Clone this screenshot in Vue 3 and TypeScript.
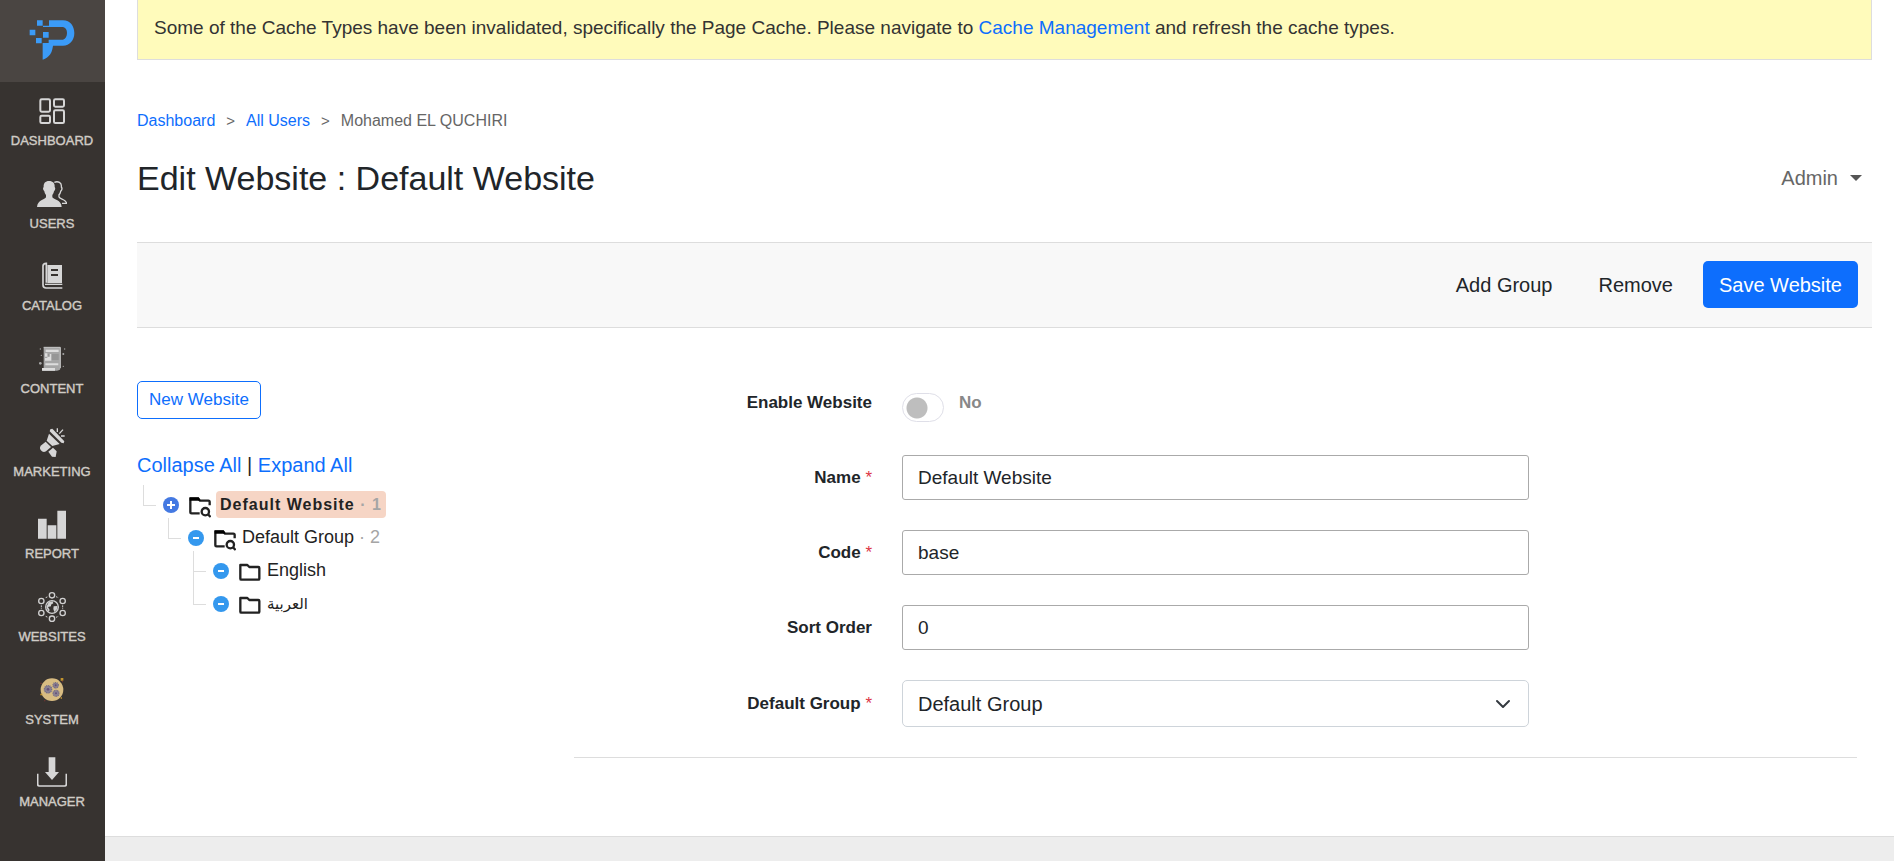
<script setup lang="ts">
import { ref } from 'vue'

const navItems: { id: string; label: string }[] = [
  { id: 'dashboard', label: 'DASHBOARD' },
  { id: 'users', label: 'USERS' },
  { id: 'catalog', label: 'CATALOG' },
  { id: 'content', label: 'CONTENT' },
  { id: 'marketing', label: 'MARKETING' },
  { id: 'report', label: 'REPORT' },
  { id: 'websites', label: 'WEBSITES' },
  { id: 'system', label: 'SYSTEM' },
  { id: 'manager', label: 'MANAGER' },
]

interface TreeRow {
  label: string
  depth: number
  lang?: string
  count?: number
  open?: boolean
  selected?: boolean
  sibling?: boolean
}

const tree: TreeRow[] = [
  { label: 'Default Website', depth: 0, count: 1, selected: true },
  { label: 'Default Group', depth: 1, count: 2, open: true },
  { label: 'English', depth: 2, open: true },
  { label: 'العربية', depth: 2, open: true, sibling: true, lang: 'ar' },
]

const enabled = ref(false)
const name = ref('Default Website')
const code = ref('base')
const sortOrder = ref('0')
const group = ref('Default Group')
</script>

<template>
  <div class="page">
    <aside class="sidebar">
      <a class="logo" href="#" aria-label="Home">
        <svg width="46" height="42" viewBox="88 58 138 126" fill="#3b9bf8">
          <path d="M148 62H190C212 62 224 80 224 100C224 122 210 138 190 138H160C157 160 150 172 129 180V130H147V120H190C198 118 202 110 202 100C202 90 198 84 190 82H130V78H148Z" />
          <path d="M112 62h17v16h-17zM90 90h17v17h-17zM109 115h17v16h-17zM130 97h17v17h-17z" />
        </svg>
      </a>
      <nav class="nav" aria-label="Main">
        <a v-for="item in navItems" :key="item.id" class="nav-item" href="#">
          <svg class="nav-icon" width="30" height="30" viewBox="0 0 90 90" fill="#d6d6d6" aria-hidden="true">
            <g v-if="item.id === 'dashboard'" fill="none" stroke="#d6d6d6" stroke-width="6">
              <rect x="10" y="10" width="29" height="37" rx="4" />
              <rect x="51" y="10" width="30" height="22" rx="4" />
              <rect x="10" y="59" width="29" height="22" rx="4" />
              <rect x="51" y="43" width="30" height="38" rx="4" />
            </g>
            <g v-else-if="item.id === 'users'">
              <path d="M36 6C25 6 19 13 20 24C16 27 19 34 22 37C23 43 25 46 27 48V55C24 62 2 62 0 84H74C73 62 50 62 46 55V48C49 45 50 41 51 37C55 33 56 27 53 24C54 13 48 6 36 6Z" />
              <path d="M52 10C63 5 75 11 73 24C76 28 74 34 71 37C70 43 68 45 66 47V54C69 61 87 60 89 73H75" fill="none" stroke="#d6d6d6" stroke-width="4" />
            </g>
            <g v-else-if="item.id === 'catalog'">
              <path d="M75 12H31V66H75Z" />
              <path d="M76 81H27Q18 81 18 72V15Q18 8 28 7V65" fill="none" stroke="#d6d6d6" stroke-width="5" />
              <path d="M24 70H76" fill="none" stroke="#d6d6d6" stroke-width="4" />
              <path d="M42 27H63M42 42H63" stroke="#373330" stroke-width="6" />
            </g>
            <g v-else-if="item.id === 'content'">
              <path d="M20 10H70V70Q72 80 60 80H16V72H20Z" fill="#a6a6a6" />
              <path d="M26 17H65V24H26Z" fill="#dddddd" />
              <path d="M33 30H65V48H33Z" fill="#969696" />
              <path d="M24 28H31V38H38V30H43V50H24V42H31V38H24Z" fill="#dddddd" />
              <path d="M25 58H64V64H25ZM15 72H54V80H15Z" fill="#dddddd" />
              <path d="M20 10H70V72" fill="none" stroke="#c8c8c8" stroke-width="3" />
              <g fill="#a6a6a6">
                <circle cx="10" cy="58" r="4" /><circle cx="79" cy="30" r="3" />
                <circle cx="13" cy="34" r="2" /><circle cx="10" cy="15" r="2" /><circle cx="83" cy="15" r="2" /><circle cx="79" cy="67" r="2" />
              </g>
            </g>
            <g v-else-if="item.id === 'marketing'">
              <path d="M40 7L46 5L82 43L80 49L73 47L38 13Z" />
              <path d="M36 20L68 51L46 57L29 41Z" />
              <path d="M26 44L42 60L27 73Q18 78 11 69Q6 61 13 55Z" />
              <path d="M48 62L59 73L56 90L45 89L34 74Z" />
              <path d="M61 4V15M78 8L67 20M83 27H72" stroke="#d6d6d6" stroke-width="4" />
            </g>
            <g v-else-if="item.id === 'report'">
              <path d="M3 29H29V89H3ZM32 49H58V89H32ZM61 5H87V89H61Z" />
            </g>
            <g v-else-if="item.id === 'websites'" fill="none" stroke="#d0d0d0" stroke-width="4">
              <circle cx="45" cy="45" r="19" />
              <path d="M28 45L35 31L47 28L49 34L42 38V43L33 45L38 54L35 60ZM50 43L61 42V51L52 60L49 51Z" fill="#d0d0d0" stroke="none" />
              <circle cx="45" cy="10" r="8" /><circle cx="77" cy="27" r="8" /><circle cx="77" cy="63" r="8" />
              <circle cx="45" cy="80" r="8" /><circle cx="13" cy="63" r="8" /><circle cx="13" cy="27" r="8" />
              <path d="M26 17L33 14M57 14L64 17M26 73L33 76M57 76L64 73M13 40V50M77 40V50" stroke-dasharray="5 2" stroke-width="3" />
            </g>
            <g v-else-if="item.id === 'system'">
              <circle cx="45" cy="44" r="34" fill="#d8bc82" />
              <g fill="#8b8191" stroke="#746c86" stroke-width="4" stroke-dasharray="3 2">
                <circle cx="33" cy="43" r="11" /><circle cx="56" cy="31" r="8" /><circle cx="57" cy="55" r="9" />
              </g>
              <g fill="#665078">
                <circle cx="33" cy="43" r="4" /><circle cx="56" cy="31" r="3" /><circle cx="57" cy="55" r="3" />
              </g>
              <path d="M71 9H79V17H71ZM10 56H16V61H10ZM71 67H75V71H71Z" fill="#c4952e" />
              <path d="M10 23H14V27H10ZM21 76H25V79H21ZM75 17H78V22H75Z" fill="#743632" />
            </g>
            <g v-else>
              <path d="M35 1H55V45H66L45 69L24 45H35Z" />
              <path d="M2 50V82Q2 87 7 87H83Q88 87 88 82V50" fill="none" stroke="#d6d6d6" stroke-width="5" />
            </g>
          </svg>
          <span>{{ item.label }}</span>
        </a>
      </nav>
    </aside>

    <div class="body">
      <main class="content">
        <div class="alert" role="status">
          Some of the Cache Types have been invalidated, specifically the Page Cache. Please navigate to
          <a href="#">Cache Management</a> and refresh the cache types.
        </div>

        <nav class="breadcrumb" aria-label="Breadcrumb">
          <a href="#">Dashboard</a>
          <span class="sep">&gt;</span>
          <a href="#">All Users</a>
          <span class="sep">&gt;</span>
          <span>Mohamed EL QUCHIRI</span>
        </nav>

        <header class="heading">
          <h1>Edit Website : Default Website</h1>
          <button class="account" type="button">Admin <span class="caret"></span></button>
        </header>

        <div class="toolbar">
          <button class="btn" type="button">Add Group</button>
          <button class="btn" type="button">Remove</button>
          <button class="btn primary" type="submit" form="website-form">Save Website</button>
        </div>

        <div class="columns">
          <section class="tree-panel">
            <button class="btn-outline" type="button">New Website</button>
            <div class="tree-actions"><a href="#">Collapse All</a> | <a href="#">Expand All</a></div>
            <ul class="tree">
              <li v-for="row in tree" :key="row.label" :class="['depth-' + row.depth, { sibling: row.sibling }]">
                <button class="toggle" type="button" :aria-label="(row.open ? 'Collapse ' : 'Expand ') + row.label">
                  <svg width="16" height="16" viewBox="0 0 16 16">
                    <circle cx="8" cy="8" r="8" :fill="row.open ? '#3498ee' : '#4479e2'" />
                    <path :d="row.open ? 'M5 8H11' : 'M4 8H12M8 4V12'" stroke="#fff" stroke-width="2" />
                  </svg>
                </button>
                <svg v-if="row.count" class="folder" width="22" height="22" viewBox="0 0 66 66" fill="none" stroke="#222" stroke-width="7">
                  <path d="M32 52H8Q4 52 4 48V8H28L33 14H58Q62 14 62 18V28" />
                  <path d="M2 4H29L35 14H2Z" fill="#000" stroke="none" />
                  <circle cx="49" cy="47" r="11" />
                  <path d="M57 55L65 63" />
                </svg>
                <svg v-else class="folder plain" width="22" height="18" viewBox="0 0 66 54" fill="none" stroke="#222" stroke-width="7" stroke-linejoin="round">
                  <path d="M4 47V6H25L31 12H58Q61 12 61 15V47Q61 50 58 50H7Q4 50 4 47Z" />
                </svg>
                <a href="#" class="label" :class="{ selected: row.selected }" :lang="row.lang">{{ row.label }}<span v-if="row.count" class="count"> · {{ row.count }}</span></a>
              </li>
            </ul>
          </section>

          <form id="website-form" class="form" @submit.prevent>
            <div class="row">
              <label for="enable">Enable Website</label>
              <div class="switch-line">
                <input id="enable" v-model="enabled" class="switch" type="checkbox" role="switch" />
                <span class="state">{{ enabled ? 'Yes' : 'No' }}</span>
              </div>
            </div>
            <div class="row">
              <label for="name">Name <span class="req">*</span></label>
              <input id="name" v-model="name" class="field" type="text" required />
            </div>
            <div class="row">
              <label for="code">Code <span class="req">*</span></label>
              <input id="code" v-model="code" class="field" type="text" required />
            </div>
            <div class="row">
              <label for="sort">Sort Order</label>
              <input id="sort" v-model="sortOrder" class="field" type="text" inputmode="numeric" />
            </div>
            <div class="row">
              <label for="group">Default Group <span class="req">*</span></label>
              <select id="group" v-model="group" class="field select" required>
                <option>Default Group</option>
              </select>
            </div>
            <hr />
          </form>
        </div>
      </main>
      <footer class="footer"></footer>
    </div>
  </div>
</template>

<style>
body {
  margin: 0;
  background: #fff;
}
</style>

<style scoped>
* {
  box-sizing: border-box;
}
.page {
  display: grid;
  grid-template-columns: 105px minmax(0, 1fr);
  min-height: 100vh;
  font-family: "Liberation Sans", Arial, "DejaVu Sans", sans-serif;
  font-size: 20px;
  color: #212529;
}
a {
  color: #0d6efd;
  text-decoration: none;
}
button,
input,
select {
  font-family: inherit;
  color: inherit;
}
.sidebar {
  display: flex;
  flex-direction: column;
  padding-bottom: 35px;
  background: #373330;
}
.logo {
  display: flex;
  justify-content: center;
  height: 82px;
  padding: 19px 1px 0 0;
  background: #4a4542;
}
.nav {
  flex: 1;
  display: grid;
  grid-auto-rows: 1fr;
}
.nav-item {
  display: flex;
  flex-direction: column;
  align-items: center;
  gap: 7px;
  padding: 14px 1px 0 0;
  font-size: 13px;
  line-height: 16px;
  color: #d0ccc6;
  -webkit-text-stroke: 0.4px #d0ccc6;
}
.nav-icon {
  display: block;
}
.body {
  display: flex;
  flex-direction: column;
}
.content {
  padding: 0 22px 78px 32px;
}
.alert {
  padding: 14px 16px 18px;
  border: 1px solid #ddd;
  border-top: 0;
  background: #fffbbb;
  color: #333;
  font-size: 19px;
  line-height: 27px;
}
.breadcrumb {
  display: flex;
  gap: 11px;
  margin-top: 49px;
  font-size: 16px;
  line-height: 24px;
  color: #666;
}
.sep {
  font-size: 15px;
}
.heading {
  display: flex;
  justify-content: space-between;
  align-items: center;
  margin: 23px 0 42px;
}
h1 {
  margin: 0;
  font-size: 34px;
  line-height: 44px;
  font-weight: 400;
}
.account {
  display: flex;
  align-items: center;
  gap: 12px;
  padding: 0 10px;
  border: 0;
  background: none;
  font-size: 20px;
  color: #666;
}
.caret {
  border: 6px solid transparent;
  border-top-color: #555;
  border-bottom: 0;
}
.toolbar {
  display: flex;
  justify-content: flex-end;
  align-items: center;
  gap: 14px;
  padding: 18px 14px 19px;
  border: solid #ddd;
  border-width: 1px 0;
  background: #f8f8f8;
}
.btn {
  height: 47px;
  padding: 1px 16px 0;
  border: 0;
  border-radius: 5px;
  background: none;
  font-size: 20px;
}
.primary {
  background: #0d6efd;
  color: #fff;
}
.columns {
  display: grid;
  grid-template-columns: minmax(0, 437fr) minmax(0, 1283fr);
  padding-right: 15px;
  padding-top: 52px;
}
.tree-panel {
  padding-top: 1px;
}
.btn-outline {
  display: block;
  height: 38px;
  padding: 0 11px;
  border: 1px solid #0d6efd;
  border-radius: 5px;
  background: none;
  font-size: 17px;
  color: #0d6efd;
}
.tree-actions {
  margin-top: 31px;
  line-height: 30px;
}
.tree {
  margin: 8px 0 0;
  padding: 0 0 0 6px;
  list-style: none;
  font-size: 18px;
}
.tree li {
  position: relative;
  display: flex;
  align-items: center;
  height: 33px;
  padding-left: 20px;
}
.tree li::before {
  content: "";
  position: absolute;
  left: 0;
  top: -3px;
  width: 12px;
  height: 20px;
  border: solid #ddd;
  border-width: 0 0 1px 1px;
}
.tree li.sibling::before {
  top: -17px;
  height: 34px;
}
.tree .depth-1 {
  margin-left: 25px;
}
.tree .depth-2 {
  margin-left: 50px;
}
.toggle {
  display: block;
  height: 16px;
  padding: 0;
  border: 0;
  background: none;
}
.toggle svg {
  display: block;
}
.folder {
  margin: 5px 2px 0 10px;
}
.plain {
  margin-top: 3px;
}
.label {
  padding: 0 4px;
  border-radius: 4px;
  line-height: 27px;
  color: #222;
}
.label:lang(ar) {
  font-size: 15px;
}
.selected {
  margin-left: 3px;
  background: #f6d5c5;
  font-size: 16px;
  font-weight: 700;
  letter-spacing: 1px;
}
.count {
  color: #a5a5a5;
}
.form {
  display: flex;
  flex-direction: column;
  gap: 30px;
}
.row {
  display: grid;
  grid-template-columns: 298fr 627fr 298fr;
  gap: 30px;
  align-items: center;
  min-height: 45px;
}
.row label {
  text-align: right;
  font-size: 17px;
  font-weight: 700;
}
.req {
  color: #dc3545;
  font-weight: 400;
}
.field {
  width: 100%;
  min-width: 0;
  height: 45px;
  padding: 0 15px;
  border: 1px solid #aaa;
  border-radius: 3px;
  background: #fff;
  font-size: 19px;
}
.select {
  appearance: none;
  height: 47px;
  border-color: #ced4da;
  border-radius: 5px;
  background: #fff url("data:image/svg+xml,%3Csvg xmlns='http://www.w3.org/2000/svg' viewBox='0 0 16 16'%3E%3Cpath fill='none' stroke='%23343a40' stroke-linecap='round' stroke-linejoin='round' stroke-width='2' d='m2 5 6 6 6-6'/%3E%3C/svg%3E") no-repeat right 17px center / 16px 16px;
  font-size: 20px;
}
.switch-line {
  display: flex;
  align-items: center;
  gap: 15px;
  font-size: 17px;
  font-weight: 700;
}
.switch {
  appearance: none;
  width: 42px;
  height: 29px;
  margin: 9px 0 0;
  border: 1px solid #dfdfe8;
  border-radius: 15px;
  background: radial-gradient(circle at 14px 14px, #bebebe 10px, transparent 11px);
}
.switch:checked {
  background: radial-gradient(circle at 26px 14px, #0d6efd 10px, transparent 11px);
}
.state {
  color: #888;
}
hr {
  width: 100%;
  margin: 0;
  border: 0;
  border-top: 1px solid #ddd;
}
.footer {
  flex: 1;
  min-height: 24px;
  border-top: 1px solid #ddd;
  background: #ededed;
}
</style>
